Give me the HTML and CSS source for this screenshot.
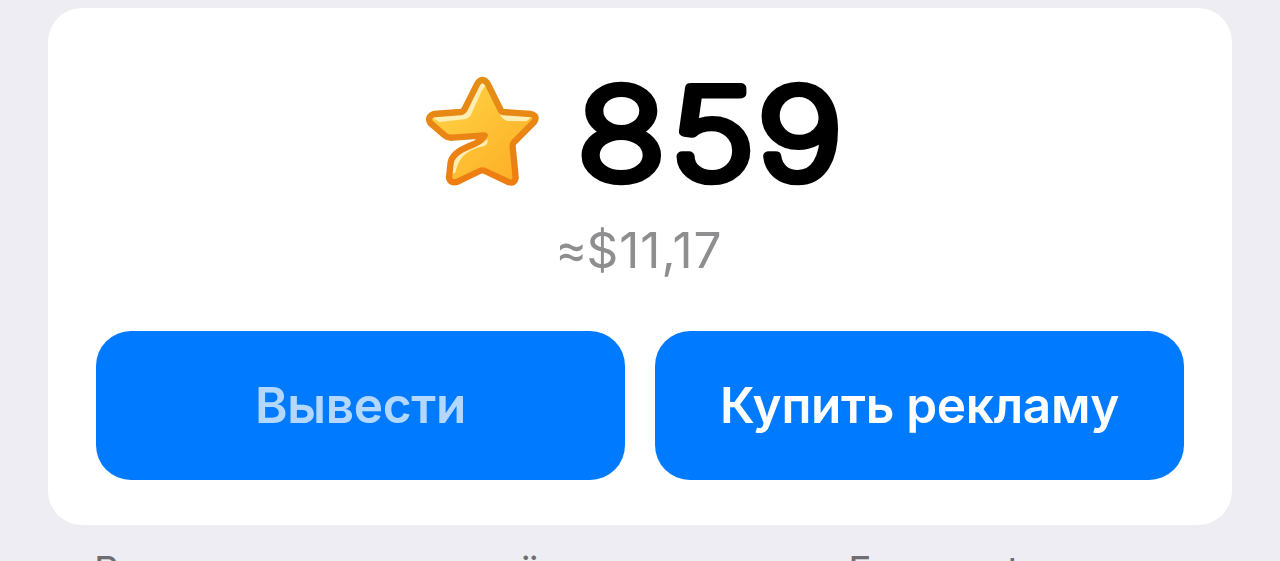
FILE: index.html
```
<!DOCTYPE html>
<html lang="ru">
<head>
    <meta charset="UTF-8">
    <title>Баланс</title>
    <link rel="stylesheet" href="styles.css">
</head>
<body>
    <div class="card">
        <div class="balance">
            <svg class="star" viewBox="0 0 420 405">
                <defs>
                    <linearGradient id="gold" x1="0" y1="0" x2="1" y2="1">
                        <stop offset="0" stop-color="#ffd849"/>
                        <stop offset="1" stop-color="#fdaa22"/>
                    </linearGradient>
                    <linearGradient id="edge" x1="0" y1="0" x2="0" y2="1">
                        <stop offset="0" stop-color="#e58e16"/>
                        <stop offset="1" stop-color="#ee7d12"/>
                    </linearGradient>
                </defs>
                <path fill="url(#gold)" d="M187 56Q202 34 218 56L257 135Q259 140 265 141L348 147Q369 152 358 170L297 232Q292 238 293 246L302 338Q299 357 282 352L210 318Q202 314 194 318L128 350Q105 357 102 337L107 292C113 262 150 248 180 236Q198 228 209 211L112 218Q98 219 90 212L46 174Q35 155 57 147L137 141Q145 140 149 132Z"/>
                <path class="shine" d="M200 52L213 60L200 78L168 149Q160 162 146 163L74 171L52 158L140 148Q148 147 154 138L190 62Z"/>
                <path class="shine" d="M252 143Q258 149 268 149L350 155L335 169L277 168Q262 164 252 143Z"/>
                <path class="shine" d="M218 222Q220 240 206 244C164 253 132 270 122 322L111 328L115 292C122 265 157 251 190 241Q206 234 218 222Z"/>
                <path fill="none" stroke="url(#edge)" stroke-width="19" stroke-linejoin="round" d="M187 56Q202 34 218 56L257 135Q259 140 265 141L348 147Q369 152 358 170L297 232Q292 238 293 246L302 338Q299 357 282 352L210 318Q202 314 194 318L128 350Q105 357 102 337L107 292C113 262 150 248 180 236Q198 228 209 211L112 218Q98 219 90 212L46 174Q35 155 57 147L137 141Q145 140 149 132Z"/>
            </svg>
            <svg class="amount" viewBox="0 0 280 135">
                <text transform="translate(13.500 113.500) scale(1.16 1)">8</text>
                <text transform="translate(106.500 113.500) scale(1.16 1)">5</text>
                <text transform="translate(193.500 113.500) scale(1.16 1)">9</text>
            </svg>
        </div>
        <div class="price"><span class="approx">≈</span>$11,17</div>
        <div class="buttons">
            <button class="btn disabled"><span>Вывести</span></button>
            <button class="btn"><span>Купить рекламу</span></button>
        </div>
    </div>
    <p class="note">Вы можете вывести звёзды с помощью Fragment.</p>
</body>
</html>
```

FILE: styles.css
```
*{
    margin: 0;
    padding: 0;
    box-sizing: border-box;
}
body{
    background: #eeedf3;
    font-family: Inter, "Liberation Sans", sans-serif;
    height: 561px;
    overflow: hidden;
    padding: 8px 48px 0;
}
.card{
    height: 517px;
    background: white;
    border-radius: 34px;
    padding: 57px 48px 0;
}
.balance{
    display: flex;
    height: 135px;
    padding-left: 319px;
    gap: 9px;
}
.star{
    width: 140px;
    height: 135px;
}
.star .shine{
    fill: #ffeeb4;
}
.amount{
    width: 280px;
    height: 135px;
    overflow: visible;
    font-size: 125px;
    font-weight: 250;
    stroke: black;
    stroke-width: 10px;
    stroke-linejoin: round;
}
.price{
    height: 100px;
    line-height: 101px;
    text-align: center;
    font-size: 49.500px;
    letter-spacing: 1px;
    color: #8e8e90;
}
.approx{
    font-family: Roboto, sans-serif;
}
.buttons{
    display: grid;
    grid-template-columns: 1fr 1fr;
    gap: 30px;
    margin-top: 31px;
}
.btn{
    height: 149px;
    border: 0;
    border-radius: 35px;
    background: #007aff;
    color: white;
    font: 600 49.500px Inter, "Liberation Sans", sans-serif;
    letter-spacing: -0.3px;
    padding-bottom: 2px;
}
.btn.disabled span{
    opacity: 0.7;
}
.note{
    margin: 22px 0 0 46px;
    font-size: 39px;
    line-height: 48px;
    letter-spacing: -0.500px;
    white-space: nowrap;
    color: #6d6d72;
}
```
